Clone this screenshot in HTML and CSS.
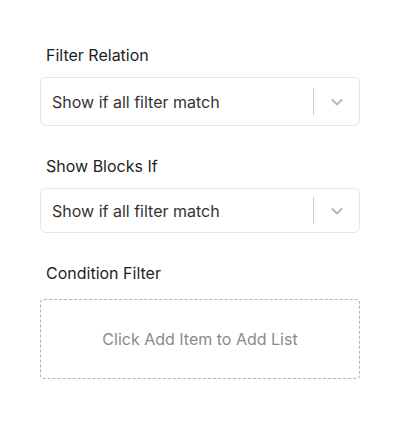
FILE: index.html
```html
<!DOCTYPE html>
<html>
<head>
<meta charset="utf-8">
<link rel="stylesheet" href="styles.css">
</head>
<body>
<div class="panel">
  <div class="field">
    <div class="label">Filter Relation</div>
    <div class="select select-tall">
      <span class="value">Show if all filter match</span>
      <span class="sep"></span>
      <svg class="chev" width="16" height="16" viewBox="0 0 16 16"><path d="M3.5 6 L8 10.5 L12.5 6" fill="none" stroke="#b8b8b8" stroke-width="2" stroke-linecap="round" stroke-linejoin="round"/></svg>
    </div>
  </div>
  <div class="field">
    <div class="label">Show Blocks If</div>
    <div class="select">
      <span class="value">Show if all filter match</span>
      <span class="sep"></span>
      <svg class="chev" width="16" height="16" viewBox="0 0 16 16"><path d="M3.5 6 L8 10.5 L12.5 6" fill="none" stroke="#b8b8b8" stroke-width="2" stroke-linecap="round" stroke-linejoin="round"/></svg>
    </div>
  </div>
  <div class="field">
    <div class="label label-cond">Condition Filter</div>
    <div class="empty">Click Add Item to Add List</div>
  </div>
</div>
</body>
</html>
```
FILE: styles.css
```css
html, body {
  margin: 0;
  padding: 0;
  background: #ffffff;
}
body {
  font-family: Inter, "Noto Sans", sans-serif;
  color: #1e1e1e;
}
.panel {
  padding: 43px 40px 0 40px;
  display: flex;
  flex-direction: column;
  gap: 28px;
}
.field {
  display: flex;
  flex-direction: column;
  gap: 10px;
}
.label {
  font-size: 16px;
  line-height: 24px;
  padding-left: 6px;
  color: #1e1e1e;
}
.label-cond {
  margin-bottom: 4px;
}
.select {
  box-sizing: border-box;
  height: 45px;
  border: 1px solid #e6e6e6;
  border-radius: 6px;
  display: flex;
  align-items: center;
  padding-left: 11px;
  padding-right: 14px;
}
.select-tall {
  height: 49px;
}
.value {
  flex: 1;
  font-size: 16px;
  color: #333333;
}
.sep {
  width: 1px;
  height: 27px;
  background: #cccccc;
  margin-right: 15px;
}
.chev {
  display: block;
}
.empty {
  box-sizing: border-box;
  height: 80px;
  border: 1px dashed #b3b3b3;
  border-radius: 4px;
  display: flex;
  align-items: center;
  justify-content: center;
  font-size: 16px;
  color: #8a8a8a;
}
```
